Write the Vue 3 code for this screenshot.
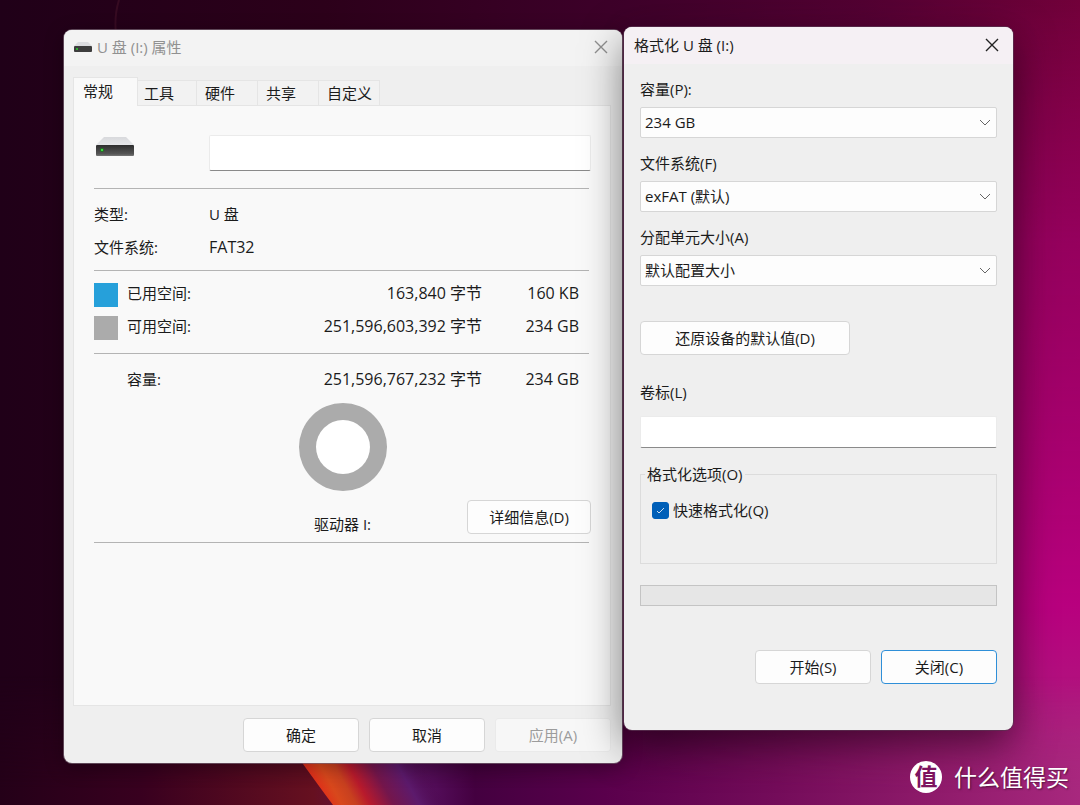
<script setup>
import { ref } from 'vue'

const tabs = ['常规', '工具', '硬件', '共享', '自定义']
const activeTab = ref('常规')

const usage = [
  { label: '已用空间:', swatch: 'used', bytes: '163,840 字节', size: '160 KB' },
  { label: '可用空间:', swatch: 'free', bytes: '251,596,603,392 字节', size: '234 GB' },
]

const fields = [
  { id: 'capacity', label: '容量(P):', value: '234 GB' },
  { id: 'filesystem', label: '文件系统(F)', value: 'exFAT (默认)' },
  { id: 'allocation', label: '分配单元大小(A)', value: '默认配置大小' },
]

const driveName = ref('')
const volumeLabel = ref('')
const quickFormat = ref(true)
</script>

<template>
  <div class="desktop">
    <svg class="wallpaper" viewBox="0 0 1080 805" preserveAspectRatio="none" aria-hidden="true">
      <defs>
        <linearGradient id="base" x1="0" y1="0" x2="1" y2="0">
          <stop offset="0" stop-color="#200018" />
          <stop offset="0.3" stop-color="#2c001a" />
          <stop offset="0.58" stop-color="#3e002a" />
          <stop offset="0.8" stop-color="#520032" />
          <stop offset="1" stop-color="#72003a" />
        </linearGradient>
        <linearGradient id="rightGlow" x1="0" y1="0" x2="0" y2="1">
          <stop offset="0" stop-color="#a60064" stop-opacity="0" />
          <stop offset="0.3" stop-color="#9e0066" stop-opacity="0.8" />
          <stop offset="0.75" stop-color="#b8007e" />
          <stop offset="1" stop-color="#a8287e" />
        </linearGradient>
        <linearGradient id="fadeIn" x1="0" y1="0" x2="1" y2="0">
          <stop offset="0.55" stop-color="#000" />
          <stop offset="0.97" stop-color="#fff" />
        </linearGradient>
        <mask id="rightMask"><rect width="1080" height="805" fill="url(#fadeIn)" /></mask>
        <linearGradient id="floor" x1="0" y1="0" x2="1" y2="0">
          <stop offset="0" stop-color="#240018" />
          <stop offset="0.13" stop-color="#38001f" />
          <stop offset="0.29" stop-color="#661020" />
          <stop offset="0.38" stop-color="#5c1468" />
          <stop offset="0.44" stop-color="#440040" />
          <stop offset="0.56" stop-color="#5a004c" />
          <stop offset="0.72" stop-color="#740c5a" />
          <stop offset="0.86" stop-color="#8e1a6a" />
          <stop offset="1" stop-color="#a8287e" />
        </linearGradient>
        <linearGradient id="floorFade" x1="0" y1="0" x2="0" y2="1">
          <stop offset="0.84" stop-color="#000" />
          <stop offset="0.98" stop-color="#fff" />
        </linearGradient>
        <mask id="floorMask"><rect width="1080" height="805" fill="url(#floorFade)" /></mask>
        <linearGradient id="flame" gradientUnits="userSpaceOnUse" x1="312" y1="776" x2="402" y2="726">
          <stop offset="0" stop-color="#e0301a" />
          <stop offset="0.12" stop-color="#d8481c" />
          <stop offset="0.24" stop-color="#c8401f" />
          <stop offset="0.36" stop-color="#b81a2c" />
          <stop offset="0.56" stop-color="#74164c" />
          <stop offset="0.78" stop-color="#5c1a6c" />
          <stop offset="1.0" stop-color="#4a0848" stop-opacity="0" />
        </linearGradient>
      </defs>
      <rect width="1080" height="805" fill="url(#base)" />
      <rect width="1080" height="805" fill="url(#rightGlow)" mask="url(#rightMask)" />
      <rect width="1080" height="805" fill="url(#floor)" mask="url(#floorMask)" />
      <path d="M119 0 Q114 16 116 34" fill="none" stroke="#5a2034" stroke-opacity="0.35" stroke-width="2" />
      <path d="M290 746 C306 768 320 788 333 805 H480 L430 746 Z" fill="url(#flame)" />
    </svg>

    <main class="windows">
      <section class="window properties" aria-label="U 盘 (I:) 属性">
        <header class="titlebar">
          <svg class="small-drive" viewBox="0 0 18 10" aria-hidden="true">
            <path d="M4 0H14L18 4H0Z" fill="#dcdde0" />
            <rect y="4" width="18" height="6" rx="1" fill="#3d3d3d" />
            <rect x="2" y="6" width="2" height="2" fill="#2fae33" />
          </svg>
          <h1>U 盘 (I:) 属性</h1>
          <button class="close" type="button" aria-label="关闭">
            <svg viewBox="0 0 14 14" aria-hidden="true"><path d="M1 1 13 13M13 1 1 13" /></svg>
          </button>
        </header>

        <div class="prop-body">
          <div class="tabs" role="tablist">
            <button
              v-for="tab in tabs"
              :key="tab"
              type="button"
              role="tab"
              class="tab"
              :class="{ active: tab === activeTab }"
              :aria-selected="tab === activeTab"
              @click="activeTab = tab"
            >{{ tab }}</button>
          </div>

          <div class="panel" role="tabpanel">
            <div class="identity">
              <svg class="drive" viewBox="0 0 38 20" aria-hidden="true">
                <defs>
                  <linearGradient id="driveTop" x1="0" y1="0" x2="0" y2="1">
                    <stop offset="0" stop-color="#d8d9dc" />
                    <stop offset="1" stop-color="#e6e7ea" />
                  </linearGradient>
                  <linearGradient id="driveFront" x1="0" y1="0" x2="0" y2="1">
                    <stop offset="0" stop-color="#2e2e2e" />
                    <stop offset="0.8" stop-color="#555" />
                    <stop offset="1" stop-color="#777" />
                  </linearGradient>
                </defs>
                <path d="M8 0H30L38 8H0Z" fill="url(#driveTop)" />
                <rect y="8" width="38" height="11" rx="1" fill="url(#driveFront)" />
                <circle cx="6" cy="13" r="2" fill="#1f7a22" />
                <circle cx="6" cy="13" r="1" fill="#4cf04f" />
              </svg>
              <input v-model="driveName" class="textbox" type="text" aria-label="驱动器名称" />
            </div>

            <hr class="rule rule-top" />
            <dl class="facts">
              <dt>类型:</dt><dd>U 盘</dd>
              <dt>文件系统:</dt><dd class="latin">FAT32</dd>
            </dl>
            <hr class="rule rule-mid" />

            <table class="usage">
              <tbody>
                <tr v-for="row in usage" :key="row.label">
                  <th scope="row"><span class="swatch" :class="row.swatch"></span>{{ row.label }}</th>
                  <td>{{ row.bytes }}</td>
                  <td class="size">{{ row.size }}</td>
                </tr>
              </tbody>
              <tfoot>
                <tr>
                  <th scope="row"><span class="swatch"></span>容量:</th>
                  <td>251,596,767,232 字节</td>
                  <td class="size">234 GB</td>
                </tr>
              </tfoot>
            </table>

            <div class="chart">
              <svg class="donut" viewBox="0 0 88 88" role="img" aria-label="驱动器使用情况">
                <circle cx="44" cy="44" r="44" fill="#ababab" />
                <circle cx="44" cy="44" r="27" fill="#fff" />
              </svg>
              <span class="drive-letter">驱动器 I:</span>
              <button class="btn details" type="button">详细信息(D)</button>
            </div>
            <hr class="rule rule-end" />
          </div>

          <footer class="actions prop-actions">
            <button class="btn" type="button">确定</button>
            <button class="btn" type="button">取消</button>
            <button class="btn" type="button" disabled>应用(A)</button>
          </footer>
        </div>
      </section>

      <section class="window format" aria-label="格式化 U 盘 (I:)">
        <header class="titlebar">
          <h1>格式化 U 盘 (I:)</h1>
          <button class="close" type="button" aria-label="关闭">
            <svg viewBox="0 0 14 14" aria-hidden="true"><path d="M1 1 13 13M13 1 1 13" /></svg>
          </button>
        </header>

        <form class="format-body" @submit.prevent>
          <div v-for="field in fields" :key="field.id" class="field">
            <label :for="field.id">{{ field.label }}</label>
            <div class="select-wrap">
              <select :id="field.id"><option>{{ field.value }}</option></select>
              <svg class="chevron" viewBox="0 0 10 6" aria-hidden="true"><path d="M0 0 5 5 10 0" /></svg>
            </div>
          </div>

          <button class="btn restore" type="button">还原设备的默认值(D)</button>

          <div class="volume">
            <label for="volume">卷标(L)</label>
            <input id="volume" v-model="volumeLabel" class="textbox" type="text" />
          </div>

          <fieldset class="options">
            <legend>格式化选项(O)</legend>
            <label class="check">
              <span class="box">
                <input v-model="quickFormat" type="checkbox" />
                <svg viewBox="0 0 17 17" aria-hidden="true"><path d="M5 9 7 11 12 6" /></svg>
              </span>
              快速格式化(Q)
            </label>
          </fieldset>

          <progress class="progress" value="0" max="100" aria-label="格式化进度"></progress>

          <footer class="actions format-actions">
            <button class="btn" type="button">开始(S)</button>
            <button class="btn default" type="button">关闭(C)</button>
          </footer>
        </form>
      </section>
    </main>

    <div class="watermark">
      <span class="mark">值</span>
      <span>什么值得买</span>
    </div>
  </div>
</template>

<style>
body {
  margin: 0;
}
</style>

<style scoped>
.desktop {
  position: relative;
  min-height: 100vh;
  box-sizing: border-box;
  overflow: hidden;
  background: #2c001a;
  color: #1b1b1b;
  font: 15px/24px "Open Sans", "Noto Sans CJK SC", sans-serif;
}
.desktop *,
.desktop *::before {
  box-sizing: border-box;
}
button,
input,
select {
  font: inherit;
  color: inherit;
  margin: 0;
}
.wallpaper {
  position: absolute;
  inset: 0;
  width: 100%;
  height: 100%;
}
.windows {
  position: relative;
  display: flex;
  align-items: flex-start;
  gap: 2px;
  padding: 27px 67px 41px 64px;
}
.window {
  min-width: 0;
  border-radius: 8px;
  background: #efefef;
}
.properties {
  flex: 558 1 0;
  margin-top: 3px;
  box-shadow: 0 0 0 1px rgba(120, 100, 115, 0.7), 0 4px 20px rgba(0, 0, 0, 0.3);
}
.format {
  flex: 389 1 0;
  box-shadow: 0 0 0 1px rgba(90, 50, 80, 0.75), 0 14px 40px rgba(0, 0, 0, 0.5);
}
.titlebar {
  display: flex;
  align-items: center;
  height: 36px;
  padding: 0 11px 2px 10px;
  border-radius: 8px 8px 0 0;
  background: #f3f3f3;
}
.format .titlebar {
  height: 37px;
  background: #f5f0f4;
}
h1 {
  margin: 0;
  font: inherit;
}
.properties h1 {
  color: #919191;
}
.small-drive {
  width: 18px;
  height: 10px;
  margin-right: 5px;
}
.close {
  display: grid;
  place-items: center;
  width: 20px;
  height: 24px;
  margin-left: auto;
  padding: 0;
  border: 0;
  background: none;
}
.close svg {
  width: 14px;
  height: 14px;
  fill: none;
  stroke: #222;
  stroke-width: 1.4;
}
.properties .close svg {
  stroke: #8f8f8f;
}

.prop-body {
  padding: 11px 11px 11px 9px;
}
.tabs {
  display: flex;
  align-items: flex-end;
}
.tab {
  width: 61px;
  height: 25px;
  padding: 0 0 0 8px;
  border: 1px solid #e5e5e5;
  border-width: 1px 1px 0 0;
  background: #f2f2f2;
  text-align: left;
  white-space: nowrap;
}
.tab.active {
  position: relative;
  width: 65px;
  height: 29px;
  margin-bottom: -1px;
  padding: 0 0 2px 9px;
  border-left-width: 1px;
  background: #f9f9f9;
}
.tab:nth-child(2) {
  width: 59px;
  padding-left: 6px;
}
.panel {
  min-height: 601px;
  padding: 29px 19px 0 20px;
  border: 1px solid #e5e5e5;
  background: #f9f9f9;
}
.identity {
  display: grid;
  grid-template-columns: 115px 1fr;
}
.drive {
  width: 38px;
  height: 20px;
  margin: 2px 0 0 2px;
}
.textbox {
  width: 100%;
  height: 36px;
  padding: 0 6px;
  border: 1px solid #ebebeb;
  border-bottom: 1px solid #8a8a8a;
  border-radius: 2px;
  background: #fff;
}
.rule {
  height: 1px;
  margin: 0 2px 0 0;
  border: 0;
  background: #b4b4b4;
}
.rule-top {
  margin-top: 17px;
}
.rule-mid {
  margin-top: 6px;
}
.rule-end {
  margin-top: 8px;
}
.facts {
  display: grid;
  grid-template-columns: 115px 1fr;
  margin: 9px 0 0;
  line-height: 33px;
}
.facts dd {
  margin: 0;
}
.facts .latin {
  font-size: 16px;
}
.usage {
  width: calc(100% - 2px);
  margin-top: 6px;
  border-collapse: collapse;
  line-height: 33px;
}
.usage th {
  padding: 0;
  font-weight: 400;
  text-align: left;
}
.usage td {
  padding: 0;
  font-size: 16px;
  text-align: right;
}
.usage .size {
  width: 107px;
  padding-right: 10px;
}
.usage tbody tr:last-child > * {
  padding-bottom: 10px;
}
.usage tfoot tr > * {
  padding-top: 9px;
  border-top: 1px solid #b4b4b4;
}
.swatch {
  display: inline-block;
  width: 24px;
  height: 24px;
  margin-right: 9px;
  vertical-align: middle;
}
.used {
  background: #26a0da;
}
.free {
  background: #ababab;
}
.chart {
  display: grid;
  grid-template-columns: 124px 1fr 124px;
  align-items: center;
  row-gap: 9px;
  margin-top: 7px;
}
.donut {
  grid-column: 2;
  justify-self: center;
  width: 88px;
  height: 88px;
}
.drive-letter {
  grid-column: 2;
  align-self: end;
  justify-self: center;
  line-height: 20px;
}
.details {
  width: 124px;
}
.btn {
  height: 34px;
  padding: 0 0 1px;
  border: 1px solid #d6d6d6;
  border-radius: 4px;
  background: #fdfdfd;
  white-space: nowrap;
}
.btn:disabled {
  border-color: rgba(0, 0, 0, 0.05);
  background: rgba(255, 255, 255, 0.5);
  color: #9c9c9c;
}
.default {
  border-color: #2f8fd8;
}
.actions {
  display: flex;
  justify-content: flex-end;
  gap: 10px;
}
.actions .btn {
  flex: 0 1 116px;
}
.prop-actions {
  margin-top: 12px;
}

.format-body {
  padding: 13px 16px 46px;
}
.field {
  display: grid;
  gap: 6px;
  margin-bottom: 13px;
}
.select-wrap {
  display: grid;
  align-items: center;
}
.select-wrap > * {
  grid-area: 1 / 1;
}
select {
  width: 100%;
  height: 31px;
  padding: 0 24px 2px 4px;
  appearance: none;
  border: 1px solid #d6d6d6;
  border-radius: 2px;
  background: #fdfdfd;
}
.chevron {
  justify-self: end;
  width: 10px;
  height: 6px;
  margin-right: 7px;
  fill: none;
  stroke: #666;
  pointer-events: none;
}
.restore {
  display: block;
  width: 210px;
  margin-top: 35px;
}
.volume {
  display: grid;
  gap: 12px;
  margin-top: 25px;
}
.volume .textbox {
  height: 32px;
}
.options {
  min-width: 0;
  min-height: 102px;
  margin: 14px 0 0;
  padding: 12px 11px 0;
  border: 1px solid #dcdcdc;
}
.options legend {
  margin-left: -7px;
  padding: 0 2px;
}
.check {
  display: flex;
  align-items: center;
  gap: 4px;
}
.box {
  display: grid;
  width: 17px;
  height: 17px;
}
.box > * {
  grid-area: 1 / 1;
  width: 17px;
  height: 17px;
}
.box input {
  appearance: none;
  border: 1px solid #8a8a8a;
  border-radius: 3px;
  background: #fff;
}
.box input:checked {
  border-color: #005fb8;
  background: #005fb8;
}
.box svg {
  fill: none;
  stroke: #cfe0f0;
  pointer-events: none;
}
.progress {
  display: block;
  width: 100%;
  height: 21px;
  margin-top: 21px;
  appearance: none;
  border: 1px solid #c4c4c4;
  background: #e6e6e6;
}
.progress::-webkit-progress-bar {
  background: #e6e6e6;
}
.format-actions {
  margin-top: 44px;
}

.watermark {
  position: absolute;
  right: 11px;
  bottom: 11px;
  display: flex;
  align-items: center;
  gap: 12px;
  color: #fff;
  font-size: 23px;
  line-height: 34px;
  text-shadow: 1px 1px 2px rgba(0, 0, 0, 0.5);
}
.mark {
  width: 32px;
  height: 32px;
  border-radius: 50%;
  background: #fff;
  color: #7d1460;
  font-weight: 700;
  line-height: 30px;
  text-align: center;
  text-shadow: none;
}
</style>
